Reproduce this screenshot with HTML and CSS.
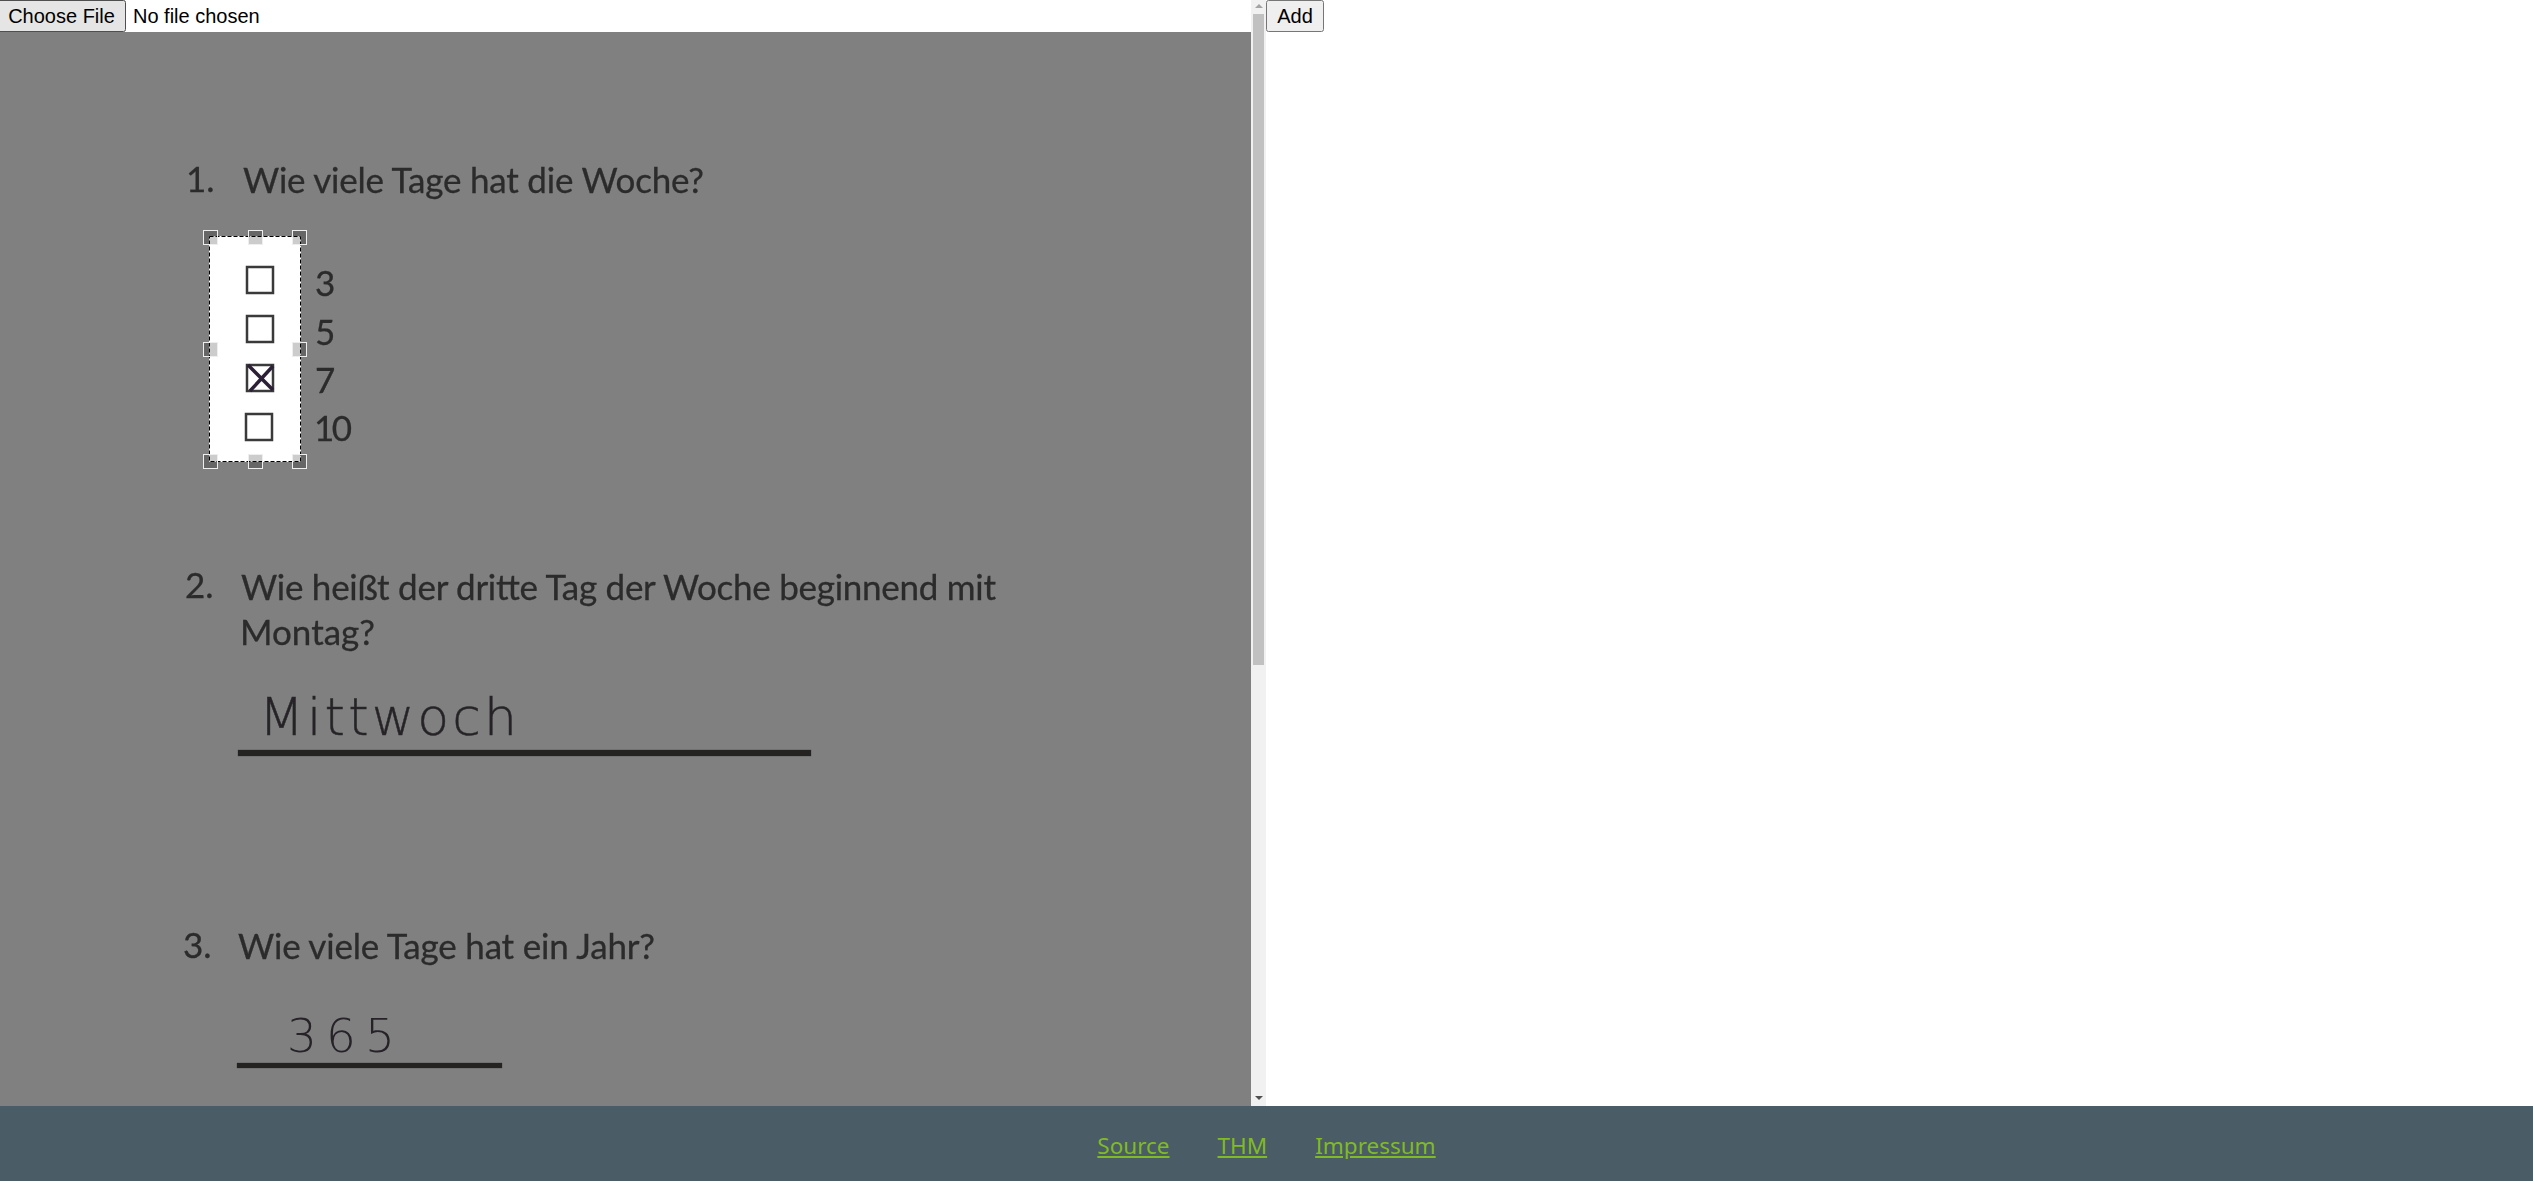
FILE: index.html
```html
<!DOCTYPE html>
<html lang="de">
<head>
    <meta charset="UTF-8">
    <title>Scan</title>
    <link rel="stylesheet" href="styles.css">
</head>
<body>
<div class="page">
    <div class="main">
        <div class="left">
            <div class="upload"><input type="file" class="file"></div>
            <div class="screen">
                <!--gescannte Seite mit Auswahl-->
                <svg class="paper" width="1251" height="1720" viewBox="0 0 1251 1720">
                    <rect class="sheet" width="1251" height="1720"/>
                    <rect class="crop" x="209" y="204" width="92" height="226"/>

                    <g class="scan">
                        <text x="186" y="160">1.</text>
                        <text x="243" y="161" textLength="461">Wie viele Tage hat die Woche?</text>

                        <text x="315" y="264">3</text>
                        <text x="315" y="313">5</text>
                        <text x="315" y="361">7</text>
                        <text x="314" y="409" textLength="38">10</text>

                        <text x="185" y="566">2.</text>
                        <text x="241" y="568" textLength="755">Wie heißt der dritte Tag der Woche beginnend mit</text>
                        <text x="240" y="613" textLength="135">Montag?</text>
                        <text class="hand" x="259" y="703" textLength="258">Mittwoch</text>
                        <rect class="line" x="238" y="718" width="573" height="6"/>

                        <text x="183" y="926">3.</text>
                        <text x="238" y="927" textLength="417">Wie viele Tage hat ein Jahr?</text>
                        <text class="hand num" x="287" y="1020" textLength="108">365</text>
                        <rect class="line" x="237" y="1031" width="265" height="5"/>
                    </g>

                    <g class="boxes">
                        <rect x="247" y="235" width="26" height="26"/>
                        <rect x="247" y="284" width="26" height="26"/>
                        <rect x="247" y="333" width="26" height="26"/>
                        <rect x="246" y="382" width="26" height="26"/>
                    </g>
                    <path class="cross" d="M248 333 L273 358 M273 334 L250 359"/>

                    <rect class="dash-under" x="209.500" y="204.500" width="91" height="225"/>
                    <rect class="dash" x="209.500" y="204.500" width="91" height="225"/>

                    <g class="handles">
                        <rect x="203.500" y="198.500" width="14" height="14"/>
                        <rect x="248.500" y="198.500" width="14" height="14"/>
                        <rect x="292.500" y="198.500" width="14" height="14"/>
                        <rect x="203.500" y="310.500" width="14" height="14"/>
                        <rect x="292.500" y="310.500" width="14" height="14"/>
                        <rect x="203.500" y="422.500" width="14" height="14"/>
                        <rect x="248.500" y="422.500" width="14" height="14"/>
                        <rect x="292.500" y="422.500" width="14" height="14"/>
                    </g>
                </svg>
            </div>
            <div class="scrollbar">
                <span class="arrow-up"></span>
                <span class="thumb"></span>
                <span class="arrow-down"></span>
            </div>
        </div>
        <div class="right">
            <button class="add">Add</button>
        </div>
    </div>
    <div class="footer">
        <a href="#">Source</a>
        <a href="#">THM</a>
        <a href="#">Impressum</a>
    </div>
</div>
</body>
</html>
```

FILE: styles.css
```css
* {
    padding: 0;
    margin: 0;
    box-sizing: border-box;
}

html, body {
    height: 100%;
    overflow: hidden;
    background: #fff;
}

.page {
    height: 100%;
    display: flex;
    flex-direction: column;
}

.main {
    flex: 1;
    min-height: 0;
    display: flex;
}

.left {
    width: 1266px;
    display: grid;
    grid-template-columns: 1251px 15px;
    grid-template-rows: 32px 1fr;
    min-height: 0;
}

.upload {
    grid-column: 1;
    height: 32px;
    overflow: hidden;
}

.file {
    display: block;
    width: 100%;
    height: 32px;
    font-family: "Liberation Sans", sans-serif;
    font-size: 20px;
    color: #000;
}

.file::file-selector-button {
    width: 129px;
    height: 32px;
    margin-left: -3px;
    margin-right: 7px;
    font: inherit;
}

.screen {
    grid-column: 1;
    grid-row: 2;
    min-height: 0;
    overflow: hidden;
}

.paper {
    display: block;
}

/* die Leiste geht ueber die ganze Hoehe */
.scrollbar {
    grid-column: 2;
    grid-row: 1 / 3;
    background: #f1f1f1;
    display: flex;
    flex-direction: column;
    align-items: center;
    padding: 4px 0 6px;
}

.arrow-up {
    border-left: 4px solid transparent;
    border-right: 4px solid transparent;
    border-bottom: 4px solid #a3a3a3;
}

.thumb {
    width: 11px;
    height: 651px;
    margin-top: 6px;
    background: #c1c1c1;
}

.arrow-down {
    margin-top: auto;
    border-left: 4px solid transparent;
    border-right: 4px solid transparent;
    border-top: 4px solid #505050;
}

.sheet {
    fill: #808080;
}

.crop {
    fill: #fff;
}

.scan {
    font-family: Lato, "Noto Sans", sans-serif;
    font-size: 35px;
    fill: #2b2b2b;
    stroke: #2b2b2b;
    stroke-width: 0.3;
    filter: blur(0.4px);
}

.hand {
    font-family: "DejaVu Sans", sans-serif;
    font-weight: 200;
    font-size: 52px;
    fill: #262228;
    stroke-width: 0.5;
}

.num {
    font-size: 47px;
    stroke-width: 0;
}

.line {
    fill: #242321;
}

.boxes rect {
    fill: #fff;
    stroke: #3a3a3a;
    stroke-width: 2.5;
}

.cross {
    fill: none;
    stroke: #2c2036;
    stroke-width: 3.5;
}

.dash-under {
    fill: none;
    stroke: #fff;
    stroke-width: 1;
}

.dash {
    fill: none;
    stroke: #000;
    stroke-width: 1;
    stroke-dasharray: 4 2;
}

.handles rect {
    fill: rgba(0, 0, 0, 0.2);
    stroke: #eee;
    stroke-width: 1;
}

.right {
    flex: 1;
}

.add {
    display: block;
    font-family: "Liberation Sans", sans-serif;
    font-size: 20px;
    height: 32px;
    width: 58px;
}

.footer {
    height: 75px;
    background: #4a5c66;
    display: flex;
    justify-content: center;
    align-items: center;
    gap: 48px;
    padding-top: 3px;
    font-family: "Noto Sans", sans-serif;
    font-size: 22.500px;
}

.footer a {
    color: #80ba24;
}
```
